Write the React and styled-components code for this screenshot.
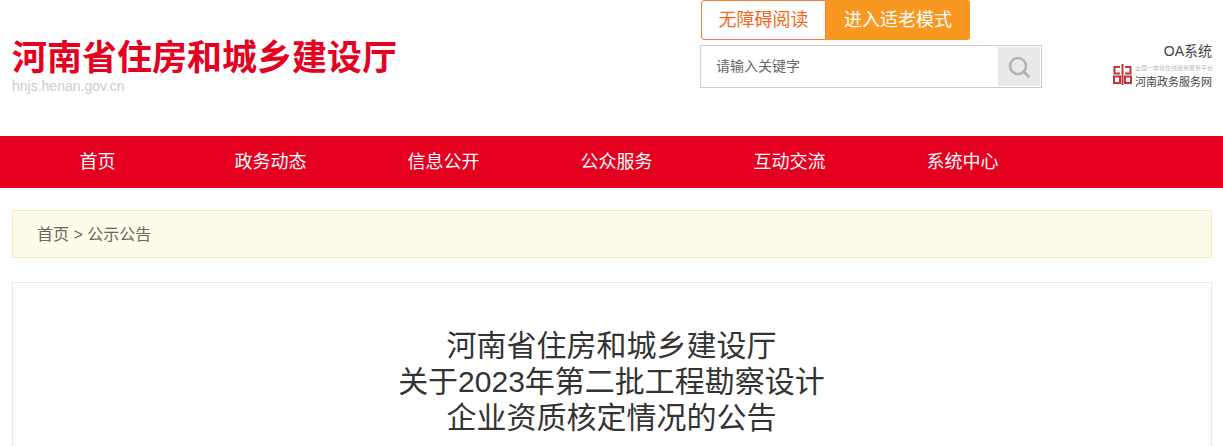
import React from 'react';
import styled, { createGlobalStyle } from 'styled-components';

const GlobalStyle = createGlobalStyle`
  html, body {
    margin: 0;
    padding: 0;
    background: #fff;
    overflow: hidden;
    font-family: "Liberation Sans", "Noto Sans CJK SC", sans-serif;
  }
  * { box-sizing: border-box; }
`;

const Page = styled.div`
  width: 1223px;
  height: 446px;
  overflow: hidden;
`;

const Header = styled.header`
  height: 136px;
  padding: 0 11px 0 12px;
  display: flex;
`;

const Brand = styled.div`
  width: 688px;
  flex: none;
  padding-top: 36px;
`;

const SiteName = styled.h1`
  margin: 0;
  height: 43px;
  font-size: 35px;
  line-height: 44px;
  font-weight: 700;
  color: #e5001f;
  white-space: nowrap;
`;

const SiteUrl = styled.div`
  font-size: 14px;
  line-height: 14px;
  color: #ccc;
`;

const Tools = styled.div`
  width: 342px;
  flex: none;
`;

const ModeRow = styled.div`
  display: flex;
  padding-left: 1px;
`;

const ModeButton = styled.a`
  height: 40px;
  border-radius: ${(p) => (p.$solid ? '0 3px 3px 0' : '3px 0 0 3px')};
  width: ${(p) => (p.$solid ? '144px' : '125px')};
  border: ${(p) => (p.$solid ? 'none' : '1px solid #f47b3b')};
  background: ${(p) => (p.$solid ? '#f89820' : '#fff')};
  color: ${(p) => (p.$solid ? '#fff' : '#f26a21')};
  font-size: 18px;
  line-height: ${(p) => (p.$solid ? '41px' : '39px')};
  text-align: center;
`;

const SearchBox = styled.div`
  margin-top: 5px;
  height: 43px;
  border: 1px solid #ccc;
  padding: 1px;
  display: flex;
  justify-content: space-between;
`;

const SearchHint = styled.span`
  padding-left: 14px;
  font-size: 14px;
  line-height: 39px;
  color: #666;
`;

const SearchButton = styled.div`
  width: 42px;
  height: 39px;
  background: #e9e9e9;
  display: flex;
  align-items: center;
  justify-content: center;
`;

const Links = styled.div`
  width: 100px;
  margin-left: auto;
  padding-top: 43px;
  display: flex;
  flex-direction: column;
  align-items: flex-end;
`;

const OaLink = styled.a`
  font-size: 14px;
  line-height: 17px;
  color: #444;
`;

const GovLogo = styled.div`
  margin-top: 4px;
  width: 100px;
  padding-left: 1px;
  display: flex;
  gap: 3px;
  align-items: flex-start;

  svg {
    flex: none;
  }
`;

const GovText = styled.div`
  display: flex;
  flex-direction: column;
`;

const GovSmall = styled.span`
  font-size: 6px;
  line-height: 8px;
  color: #bbb;
  white-space: nowrap;
`;

const GovName = styled.span`
  margin-top: 4px;
  font-size: 11px;
  line-height: 13px;
  color: #444;
  white-space: nowrap;
`;

const Nav = styled.nav`
  height: 52px;
  padding-left: 11px;
  background: #e5001f;
  display: flex;
`;

const NavItem = styled.a`
  width: 173px;
  font-size: 18px;
  line-height: 52px;
  text-align: center;
  color: #fff;
`;

const Crumb = styled.div`
  margin: 22px 11px 0 12px;
  height: 48px;
  padding-left: 24px;
  background: #fffbe9;
  border: 1px solid #f5e6bd;
  font-size: 16px;
  line-height: 48px;
  color: #666;
`;

const Article = styled.main`
  margin: 24px 11px 0 12px;
  height: 300px;
  padding: 45px 1px 0 0;
  border: 1px solid #e8e8e8;
`;

const Title = styled.h2`
  margin: 0;
  font-size: 30px;
  line-height: 36px;
  font-weight: 400;
  text-align: center;
  color: #333;
`;

const navItems = ['首页', '政务动态', '信息公开', '公众服务', '互动交流', '系统中心'];

const App = () => (
  <Page>
    <GlobalStyle />
    <Header>
      <Brand>
        <SiteName>河南省住房和城乡建设厅</SiteName>
        <SiteUrl>hnjs.henan.gov.cn</SiteUrl>
      </Brand>
      <Tools>
        <ModeRow>
          <ModeButton>无障碍阅读</ModeButton>
          <ModeButton $solid>进入适老模式</ModeButton>
        </ModeRow>
        <SearchBox>
          <SearchHint>请输入关键字</SearchHint>
          <SearchButton>
            <svg width="22" height="22" viewBox="0 0 22 22" fill="none" stroke="#b4b4b4" strokeWidth="2.6">
              <circle cx="10" cy="10" r="8" />
              <path d="M16 16 L20.5 20.5" strokeLinecap="round" />
            </svg>
          </SearchButton>
        </SearchBox>
      </Tools>
      <Links>
        <OaLink>OA系统</OaLink>
        <GovLogo>
          <svg width="19" height="21" viewBox="0 0 19 21" fill="none" stroke="#c8303c" strokeWidth="2">
            <path d="M9.5 0 V21 M7 3 H1.5 V9.5 H7 M12 3 H17.5 V9.5 H12 M1 12.5 H7 V19 H1 Z M12 12.5 H18 V19 H12 Z" />
          </svg>
          <GovText>
            <GovSmall>全国一体化在线政务服务平台</GovSmall>
            <GovName>河南政务服务网</GovName>
          </GovText>
        </GovLogo>
      </Links>
    </Header>
    <Nav>
      {navItems.map((item) => (
        <NavItem key={item}>{item}</NavItem>
      ))}
    </Nav>
    <Crumb>首页 &gt; 公示公告</Crumb>
    <Article>
      <Title>
        河南省住房和城乡建设厅
        <br />
        关于2023年第二批工程勘察设计
        <br />
        企业资质核定情况的公告
      </Title>
    </Article>
  </Page>
);

export default App;
